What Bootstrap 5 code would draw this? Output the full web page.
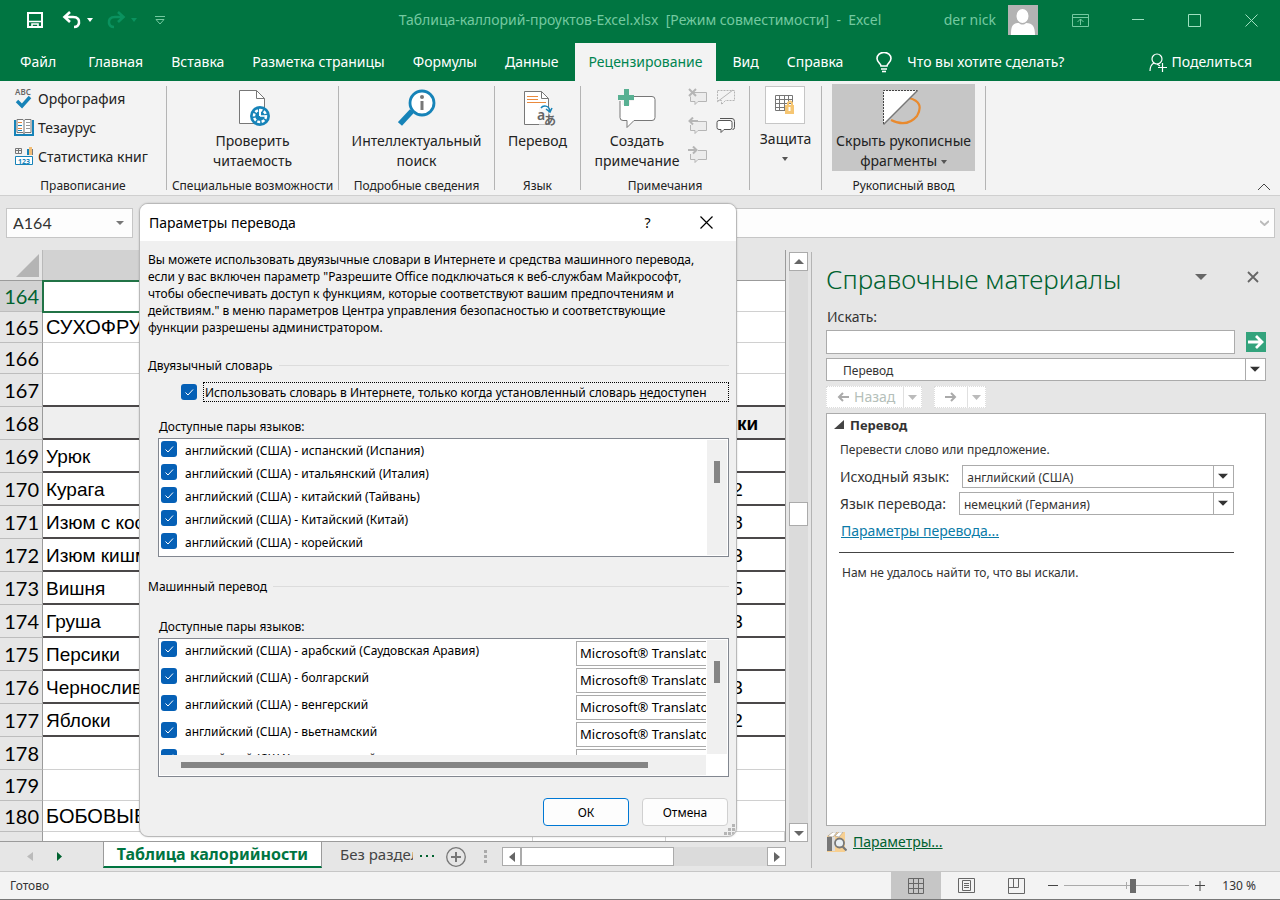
<!DOCTYPE html>
<html lang="ru">
<head>
<meta charset="utf-8">
<meta name="viewport" content="width=device-width, initial-scale=1">
<title>Таблица-каллорий-проуктов-Excel.xlsx - Excel</title>
<link href="https://cdn.jsdelivr.net/npm/bootstrap@5.3.0/dist/css/bootstrap.min.css" rel="stylesheet">
<style>
:root{--xl:#007541;--chrome:#e6e6e6;--ribbon:#f3f3f3;--edge:#ababab}
body{font:14px/20px "Noto Sans","Open Sans",sans-serif;color:#222;background:var(--chrome);overflow:hidden}
button{border:0;background:none;padding:0;color:inherit;font:inherit}
svg{display:block;flex:none}
.fs12{font-size:12px}
.shrinkable{min-height:0;min-width:0}
/* title bar and tabs */
.titlebar{background:var(--xl);color:#74c9a0;height:40px}
.titlebar .side{flex:1 1 0;min-width:0}
.winbtn{width:57px;height:40px;display:grid;place-items:center}
.tabs{background:var(--xl);height:41px}
.tabs .nav-link{color:#fff;padding:0 12px;line-height:38px;height:38px;border-radius:0}
.tabs .nav{gap:4px;padding-left:8px}
.tabs .nav-link.active{background:var(--ribbon);color:#008550;padding:0 14px}
/* ribbon */
.ribbon{background:var(--ribbon);border-bottom:1px solid #cfcfcf;height:115px}
.grp{display:flex;flex-direction:column;flex:none}
.grp-body{flex:1;padding-top:3px;display:flex;justify-content:center;align-items:flex-start}
.grp-name{font-size:12px;line-height:18px;text-align:center;white-space:nowrap}
.rule{width:1px;background:#b4b4b4;margin:5px 0}
.big{display:flex;flex-direction:column;align-items:center;white-space:nowrap;height:87px}
.big .ico{height:47px;display:grid;place-items:center}
.big.on{background:#c6c6c6;padding:0 4px}
.small-btn{display:flex;align-items:center;height:29px;gap:4px;white-space:nowrap}
.lockbox{width:40px;height:38px;border:1px solid #c6c6c6;background:#fff;display:grid;place-items:center}
.tri{display:inline-block;width:0;height:0;border:3px solid transparent;border-top:4px solid #555;border-bottom:0}
/* formula bar */
.fbar{height:54px;padding:12px 5px 12px 6px;gap:96px}
.fbox{height:30px;border:1px solid #c6c6c6;background:#fdfdfd;border-radius:0;display:flex;align-items:center}
.fbox input{border:0;background:none;width:100%;min-width:0;padding:0 6px;outline:0;color:#333}
.namebox{width:127px;flex:none}
.namebox input{font:16px/20px Lato,sans-serif}
/* sheet */
.sheet-wrap{overflow:hidden;border-right:1px solid #9b9b9b;border-bottom:1px solid #9b9b9b;background:#fff;flex:1 1 0;min-height:0;min-width:0;margin-right:3px}
.grid{width:100%;table-layout:fixed;border-collapse:separate;border-spacing:0}
.grid th,.grid td{padding:0;overflow:hidden;white-space:nowrap;height:33px;line-height:24px;vertical-align:middle;border-bottom:2px solid #4b4849}
.grid td{font:19px/24px "Liberation Sans",Arial,sans-serif;color:#000;padding:2px 4px 0 3px}
.grid td:last-child{text-align:center;padding-left:12px}
.grid tbody th{font:20px/24px Lato,sans-serif;color:#000;background:var(--chrome);border-right:1px solid #9b9b9b;border-bottom:1px solid #bdbdbd;text-align:right;padding-right:3px}
.grid thead th{height:31px;background:var(--chrome);border-bottom:1px solid #9b9b9b}
.grid thead .picked{background:#d2d2d2}
.grid tbody .picked{background:#d2d2d2;color:#00622f}
.grid .thin td{border-bottom:1px solid #d0d0d0}
.grid .low th,.grid .low td{height:31px}
.grid .head td{background:#efefef;font-weight:700}
.grid .split td{border-right:1px solid #d0d0d0}
.grid .cap td{font-size:20px;padding-top:0}
.grid td.cursor{outline:2px solid #217346;outline-offset:-1px}
.corner{border-right:1px solid #b9b9b9}
.corner svg{margin-left:16px}
.sbtn{width:19px;height:19px;border:1px solid var(--edge);background:#fff;display:grid;place-items:center;flex:none}
.vbar{width:19px;margin:2px 3px 0 0;background:#dbdbdb}
.thumb-v{height:24px;border:1px solid var(--edge);background:#fff}
.hbar{background:#dbdbdb;height:19px;width:284px}
.thumb-h{width:153px;border:1px solid var(--edge);background:#fff}
.sheetbar{height:29px;gap:0}
.sheettab{width:219px;height:26px;line-height:22px;background:#fff;border:1px solid #9b9b9b;border-width:0 1px;border-bottom:2px solid var(--xl);color:var(--xl);font-weight:700;font-size:16px;text-align:center}
/* task pane */
.pane{width:469px;margin-top:2px;border-left:1px solid #b4b4b4;padding:0 14px 0 14px;margin-bottom:3px;color:#333}
.pane h2{font:300 26px/36px "Noto Sans","Open Sans",sans-serif;color:#00622f;margin:9px 0 1px}
.field{height:24px;border:1px solid var(--edge);border-radius:0;background:#fff;padding:0 4px}
.pick{appearance:none;height:23px;border:1px solid var(--edge);border-radius:0;color:#333;font-size:12px;line-height:20px;padding:2px 24px 0 4px;background:#fff url("data:image/svg+xml,%3Csvg xmlns='http://www.w3.org/2000/svg' width='20' height='22'%3E%3Cpath d='M.5 0v22' stroke='%23ababab'/%3E%3Cpath d='M5 8h10l-5 5z' fill='%23333'/%3E%3C/svg%3E") no-repeat right center}
.navbtn{height:22px;background:#fff;border:1px dotted #dcdcdc;color:#b5bfba;display:flex;align-items:center}
.navbtn .drop{width:18px;height:22px;border-left:1px solid #e0e0e0;display:grid;place-items:center}
.results{border:1px solid var(--edge);background:#fff;min-height:0;flex:1;padding:0 31px 0 12px;margin-top:5px}
.line27{height:27px;display:flex;align-items:center}
.pane .rulebar{height:1px;background:#444;opacity:1;margin:8px 0 0;border:0}
/* status bar */
.statusbar{height:29px;background:var(--ribbon);border-top:1px solid #c6c6c6;border-bottom:1px solid #777;color:#333}
.view{width:50px;height:27px;display:grid;place-items:center}
.view.on{background:#c6c6c6}
.zoom{appearance:none;width:125px;height:14px;background:linear-gradient(#aaa,#aaa) center/100% 1px no-repeat,linear-gradient(#aaa,#aaa) center/1px 7px no-repeat}
.zoom::-webkit-slider-thumb{appearance:none;width:6px;height:14px;background:#6b6b6b}
/* dialog */
.dlg{position:absolute;left:139px;top:7px;width:598px;background:#f0f0f0;border:1px solid #b9b9b9;border-radius:9px;color:#000;font-size:12px;line-height:17px;overflow:hidden;box-shadow:0 0 2px #0003}
.dlg-head{height:37px;background:#fff;padding-left:9px;font-size:14px}
.dlg-body{padding:10px 7px 10px 8px}
.dlg p{margin:0;white-space:nowrap}
.legend-row{display:flex;align-items:center;gap:6px;height:18px}
.legend-row i{flex:1;height:1px;background:#dcdcdc}
.dlg input[type=checkbox]{appearance:none;width:16px;height:16px;flex:none;margin:0;border-radius:3px;background:#0560b6 url("data:image/svg+xml,%3Csvg xmlns='http://www.w3.org/2000/svg' width='16' height='16' fill='none' stroke='%23fff'%3E%3Cpath d='M4.500 8.500l2.500 2.500 5-5.500'/%3E%3C/svg%3E")}
.focusbox{border:1px dotted #000;flex:1;height:20px;line-height:20px;padding:0 1px;white-space:nowrap}
.lst{border:1px solid #828790;background:#fff;margin-left:10px;overflow:hidden}
.lst ul{list-style:none;margin:0;padding:0 0 0 2px;flex:1;min-width:0;overflow:hidden}
.lst li,.lst label{display:flex}
.lst label{gap:8px;line-height:22px;padding-top:2px;white-space:nowrap}
.lst label span{margin-top:-1px}
.lang5{height:119px}
.lang5 li{height:23px}
.mt{height:139px}
.mt li{height:27px;justify-content:space-between}
.mt ul{height:116px}
.mt .engine{width:130px;flex:none;height:25px;margin-top:2px;border:1px solid var(--edge);border-right:0;border-radius:0;padding:0 0 2px 3px;font-size:13px;color:#000;background:#fff}
.track{width:20px;background:#f0f0f0;margin:1px 1px 1px 1px;flex:none}
.track i{display:block;width:6px;height:22px;background:#858585;margin:21px 0 0 7px}
.track-h{height:20px;background:#f0f0f0;margin:0 22px 0 1px;padding:7px 0 0 21px}
.track-h i{display:block;height:6px;width:89%;background:#858585}
.dbtn{width:86px;height:28px;border:1px solid #d0d0d0;border-radius:4px;background:#fdfdfd}
.dbtn.main{border-color:#0078d4}
.grip{position:absolute;right:1px;bottom:1px}
</style>
</head>
<body class="d-flex flex-column vh-100">

<header class="titlebar d-flex align-items-center text-nowrap flex-shrink-0">
  <div class="side d-flex align-items-center">
    <button aria-label="Сохранить" style="margin-left:26px"><svg width="18" height="18" fill="none" stroke="#fff" stroke-width="2"><path d="M2 2h14v14H2z"/><path d="M2 10.500h14" stroke-width="1.500"/><path d="M6 16v-3h6v3" stroke-width="1.600"/></svg></button>
    <button aria-label="Отменить" style="margin-left:18px"><svg width="20" height="18" fill="none" stroke="#fff" stroke-width="2.600"><path d="M8 1L2.500 6 8 11M3 6h8c5 0 6.500 3 6 6s-2 4-5 4"/></svg></button>
    <svg style="margin-left:4px" width="8" height="5"><path d="M1 0h6L4 4z" fill="#fff"/></svg>
    <button aria-label="Вернуть" style="margin-left:12px" disabled><svg width="20" height="18" fill="none" stroke="#0a925f" stroke-width="2.600"><path d="M12 1l5.500 5L12 11M17 6H9C4 6 2.500 9 3 12s2 4 5 4"/></svg></button>
    <svg class="ms-1" width="8" height="5"><path d="M1 0h6L4 4z" fill="#0a925f"/></svg>
    <button aria-label="Настройка панели" style="margin-left:17px"><svg width="10" height="9" fill="none" stroke="#74c9a0"><path d="M0 .5h10M1 3.500h8L5 8z"/></svg></button>
  </div>
  <div>Таблица-каллорий-проуктов-Excel.xlsx&nbsp; [Режим совместимости]&nbsp; -&nbsp; Excel</div>
  <div class="side d-flex align-items-center justify-content-end">
    <span class="me-2">der nick</span>
    <svg width="30" height="30" style="margin:0 14px 0 4px"><path fill="#b3b3b3" d="M0 0h30v30H0z"/><path fill="#fff" d="M14.500 4a6 7 0 0 1 0 14 6 7 0 0 1 0-14M3 30c0-8 1-12 8-12 2 2 5 2 7 0 7 0 9 4 9 12z"/></svg>
    <button class="winbtn" aria-label="Параметры ленты"><svg width="17" height="13" fill="none" stroke="#74c9a0"><path d="M.5.500h16v12H.500zM.500 3.500h16M8.500 11V5M5.500 8l3-3 3 3"/></svg></button>
    <button class="winbtn" aria-label="Свернуть"><svg width="12" height="2"><path d="M0 0h12v1H0z" fill="#9fe0c0"/></svg></button>
    <button class="winbtn" aria-label="Развернуть"><svg width="13" height="13" fill="none" stroke="#9fe0c0"><path d="M.5.500h12v12H.500z"/></svg></button>
    <button class="winbtn" aria-label="Закрыть"><svg width="13" height="13" stroke="#9fe0c0"><path d="M.5.500l12 12M12.500.500l-12 12"/></svg></button>
  </div>
</header>

<div class="tabs d-flex align-items-end text-nowrap flex-shrink-0">
  <nav class="nav flex-nowrap">
    <a class="nav-link me-1" href="#">Файл</a>
    <a class="nav-link" href="#">Главная</a>
    <a class="nav-link" href="#">Вставка</a>
    <a class="nav-link" href="#">Разметка страницы</a>
    <a class="nav-link" href="#">Формулы</a>
    <a class="nav-link" href="#">Данные</a>
    <a class="nav-link active" href="#">Рецензирование</a>
    <a class="nav-link" href="#">Вид</a>
    <a class="nav-link" href="#">Справка</a>
  </nav>
  <a class="nav-link d-flex align-items-center" style="gap:15px;margin-left:9px" href="#"><svg width="16" height="21" fill="none" stroke="#fff" stroke-width="1.600"><path d="M5 14c0-2-4-4-4-7.500a6.500 5.700 0 0 1 14 0c0 3.500-4 5.500-4 7.500zM5 17h6"/><path d="M6 19.500h4"/></svg>Что вы хотите сделать?</a>
  <a class="nav-link d-flex align-items-center ms-auto me-3" href="#"><svg class="me-1" width="18" height="19" fill="none" stroke="#fff" stroke-width="1.200"><circle cx="8" cy="6" r="5"/><path d="M1 18c0-5 2-7 4-8M8 11l3 2M13.500 10v9M9 14.500h9"/></svg>Поделиться</a>
</div>

<section class="ribbon d-flex flex-shrink-0">
  <div class="grp" style="width:166px">
    <div class="grp-body flex-column justify-content-start" style="padding-left:14px">
      <button class="small-btn"><svg width="20" height="24"><text x="1" y="8" font-size="8" font-weight="600" fill="#666">ABC</text><path d="M3 14l5 5 8-9" fill="none" stroke="#1683b8" stroke-width="3.400"/></svg>Орфография</button>
      <button class="small-btn"><svg width="20" height="20" fill="none"><path d="M1 2v15h18V2" stroke="#1683b8" stroke-width="2"/><path d="M3 1.500h6l1 1 1-1h6v13h-6l-1 1-1-1H3z" fill="#fff" stroke="#777"/><path d="M10 2v14" stroke="#777"/><path d="M4 4.500h4M4 10.500h4" stroke="#e8833a"/><path d="M4 7.500h4M4 12.500h4" stroke="#1683b8"/><path d="M12 4.500h4M12 7.500h4M12 10.500h4" stroke="#999"/></svg>Тезаурус</button>
      <button class="small-btn"><svg width="20" height="20" fill="none"><path d="M1.500 1.500h6v5h-6zM1.500 3.500h6M4.500 1.500v5" stroke="#777"/><path d="M13 2h2v6h-2z" fill="#1683b8"/><path d="M15 0h3v8h-3z" fill="#f3bd75"/><path d="M18 2h1v6h-1z" fill="#777"/><path d="M1.500 9.500h17v8h-17z" fill="#fff" stroke="#1683b8"/><text x="4" y="16.500" font-size="7" font-weight="700" fill="#1683b8">123</text></svg>Статистика книг</button>
    </div>
    <div class="grp-name">Правописание</div>
  </div>
  <div class="rule"></div>
  <div class="grp" style="width:171px">
    <div class="grp-body"><button class="big"><span class="ico"><svg width="34" height="38" fill="none"><path d="M3.500 1.500h17l8 8v25h-25z" fill="#fff" stroke="#777"/><path d="M20.500 1.500v8h8" stroke="#777"/><circle cx="24" cy="27" r="10" fill="#1683b8"/><circle cx="24" cy="27" r="6" stroke="#fff" stroke-width="2.500" stroke-dasharray="3 1.500"/><path d="M24 20v7" stroke="#fff" stroke-width="2"/><path d="M24 27h7" stroke="#fff" stroke-width="1.500"/></svg></span>Проверить<br>читаемость</button></div>
    <div class="grp-name">Специальные возможности</div>
  </div>
  <div class="rule"></div>
  <div class="grp" style="width:155px">
    <div class="grp-body"><button class="big"><span class="ico"><svg width="38" height="38" fill="none"><path d="M2 35l12-13" stroke="#1683b8" stroke-width="5.500"/><circle cx="24" cy="14" r="12" fill="#fff" stroke="#1683b8" stroke-width="2.800"/><path d="M24 12v9" stroke="#777" stroke-width="3"/><circle cx="24" cy="8" r="2" fill="#777"/></svg></span>Интеллектуальный<br>поиск</button></div>
    <div class="grp-name">Подробные сведения</div>
  </div>
  <div class="rule"></div>
  <div class="grp" style="width:85px">
    <div class="grp-body"><button class="big"><span class="ico"><svg width="38" height="40" fill="none"><path d="M5.500 3.500h17l7 7v26h-24z" fill="#fff" stroke="#777"/><path d="M22.500 3.500v7h7" stroke="#777"/><path d="M8 8.500h11M8 11.500h11M8 14.500h19" stroke="#ea8a3d"/><path d="M20 20h14v18H20z" fill="#f3f3f3" opacity=".6"/><path d="M22 20c2-3 8-3 9 3m-4-2l4 3 2-4" stroke="#1683b8" stroke-width="1.500"/><text x="18" y="32" font-size="14" font-weight="600" fill="#666">a</text><text x="25" y="37" font-size="12" font-weight="700" fill="#666" font-family="Noto Sans CJK JP,sans-serif">あ</text></svg></span>Перевод</button></div>
    <div class="grp-name">Язык</div>
  </div>
  <div class="rule"></div>
  <div class="grp" style="width:168px">
    <div class="grp-body gap-2">
      <button class="big"><span class="ico"><svg width="40" height="40" fill="none"><path d="M6 8.500h29q3 0 3 3v18q0 3-3 3H17l-7 7v-7H6q-3 0-3-3v-18q0-3 3-3z" fill="#fff" stroke="#777"/><path d="M1 9h16M9 1v16" stroke="#f3f3f3" stroke-width="8"/><path d="M1 9.500h16M9.500 1v17" stroke="#58b092" stroke-width="5"/></svg></span>Создать<br>примечание</button>
      <div class="d-grid" style="grid-template-columns:20px 20px;grid-auto-rows:29px;column-gap:8px;padding-top:4px;align-items:start">
        <button aria-label="Удалить" disabled><svg width="20" height="18" fill="none" stroke="#b5b5b5"><path d="M5 4.500h13.500v9H10l-3 3v-3H2.500v-5" fill="#ececec"/><path d="M1 1l7 7M8 1L1 8" stroke-width="2"/></svg></button>
        <button aria-label="Показать" disabled><svg width="20" height="18" fill="none" stroke="#b5b5b5"><path d="M1.500 2.500h17v10h-9l-4 4v-4h-4z" stroke-dasharray="2 1"/><path d="M1 14L17 2"/></svg></button>
        <button aria-label="Предыдущее" disabled><svg width="20" height="18" fill="none" stroke="#b5b5b5"><path d="M9 4.500h9.500v9H10l-3 3v-3H2.500V8" fill="#ececec"/><path d="M10 4H2M5 .500L1.500 4 5 7.500" stroke-width="2"/></svg></button>
        <button aria-label="Показать все"><svg width="20" height="18" fill="none" stroke="#555"><path d="M4 1.500h12q2.500 0 2.500 3v6q0 2-2 2"/><path d="M3 3.500h11q2 0 2 2v5q0 2-2 2H8l-3 3v-3H3q-2 0-2-2v-5q0-2 2-2z" fill="#fff"/></svg></button>
        <button aria-label="Следующее" disabled><svg width="20" height="18" fill="none" stroke="#b5b5b5"><path d="M10 4.500h8.500v9H10l-3 3v-3H2.500V8" fill="#ececec"/><path d="M0 4h8M5 .500L8.500 4 5 7.500" stroke-width="2"/></svg></button>
      </div>
    </div>
    <div class="grp-name">Примечания</div>
  </div>
  <div class="rule"></div>
  <div class="grp" style="width:71px">
    <div class="grp-body"><button class="big" style="padding-top:2px"><span class="lockbox"><svg width="20" height="20" fill="none" stroke="#777"><path d="M.5.500h17v15H.500zM.500 4.500h17M.500 8.500h17M.500 12.500h17M4.500.500v15M9.500.500v15M13.500.500v15"/><path d="M13 10V8q2.500-3 4 0v3" stroke="#f6c673" stroke-width="2"/><path d="M10 10h9v9h-9z" fill="#f6c673" stroke="none"/><path d="M14.500 12v4" stroke="#fff" stroke-width="2"/></svg></span><span style="margin-top:5px">Защита</span><i class="tri" style="margin-top:8px"></i></button></div>
  </div>
  <div class="rule"></div>
  <div class="grp" style="width:163px">
    <div class="grp-body"><button class="big on"><span class="ico"><svg width="42" height="38" fill="none"><path d="M9 31q16 8 26-4 8-14-8-18" stroke="#e98a2e" stroke-width="2.200"/><path d="M1.500 1.500h34l-34 34z" fill="#fff"/><path d="M1.500 35V1.500h34" stroke="#444" stroke-dasharray="2 1"/><path d="M1.500 35.500l34-34" stroke="#777" stroke-width="1.400"/></svg></span>Скрыть рукописные<br><span>фрагменты <i class="tri align-middle"></i></span></button></div>
    <div class="grp-name">Рукописный ввод</div>
  </div>
  <div class="rule"></div>
  <button class="ms-auto align-self-end" style="margin:0 9px 4px 0" aria-label="Свернуть ленту"><svg width="14" height="8" fill="none" stroke="#444"><path d="M1 7l6-6 6 6"/></svg></button>
</section>

<main class="flex-fill d-flex flex-column position-relative shrinkable">
  <div class="fbar d-flex flex-shrink-0">
    <div class="fbox namebox"><input aria-label="Имя ячейки" value="A164"><svg width="8" height="5" style="margin-right:8px"><path d="M0 0h8L4 4z" fill="#777"/></svg></div>
    <div class="fbox flex-fill"><input aria-label="Строка формул"><svg width="9" height="6" fill="none" style="margin-right:5px"><path d="M0 1l4.500 4L9 1" stroke="#bbb" stroke-width="2"/></svg></div>
  </div>
  <div class="d-flex flex-fill shrinkable">
    <div class="d-flex flex-column flex-fill shrinkable">
      <div class="d-flex flex-fill shrinkable">
        <div class="sheet-wrap">
            <table class="grid">
              <colgroup><col style="width:43px"><col><col style="width:133px"><col style="width:119px"></colgroup>
              <thead><tr><th class="corner"><svg width="23" height="23"><path d="M23 0v23H0z" fill="#b4b4b4"/></svg></th><th class="picked"></th><th></th><th></th></tr></thead>
              <tbody>
                <tr class="thin low"><th class="picked">164</th><td class="cursor"></td><td></td><td></td></tr>
                <tr class="thin low cap"><th>165</th><td>СУХОФРУКТЫ</td><td></td><td></td></tr>
                <tr class="thin low"><th>166</th><td></td><td></td><td></td></tr>
                <tr><th>167</th><td></td><td></td><td></td></tr>
                <tr class="head"><th>168</th><td></td><td></td><td>Белки</td></tr>
                <tr><th>169</th><td>Урюк</td><td></td><td></td></tr>
                <tr><th>170</th><td>Курага</td><td></td><td>5,2</td></tr>
                <tr><th>171</th><td>Изюм с косточкой</td><td></td><td>1,8</td></tr>
                <tr><th>172</th><td>Изюм кишмиш</td><td></td><td>2,3</td></tr>
                <tr><th>173</th><td>Вишня</td><td></td><td>1,5</td></tr>
                <tr><th>174</th><td>Груша</td><td></td><td>2,3</td></tr>
                <tr><th>175</th><td>Персики</td><td></td><td></td></tr>
                <tr><th>176</th><td>Чернослив</td><td></td><td>2,3</td></tr>
                <tr><th>177</th><td>Яблоки</td><td></td><td>3,2</td></tr>
                <tr class="thin"><th>178</th><td></td><td></td><td></td></tr>
                <tr class="thin low"><th>179</th><td></td><td></td><td></td></tr>
                <tr class="thin low cap"><th>180</th><td>БОБОВЫЕ</td><td></td><td></td></tr>
                <tr class="thin low split"><th>181</th><td></td><td></td><td></td></tr>
              </tbody>
            </table>
        </div>
        <div class="vbar d-flex flex-column">
          <button class="sbtn" aria-label="Вверх"><svg width="10" height="6"><path d="M5 0l5 5H0z" fill="#666"/></svg></button>
          <div style="flex:232"></div><div class="thumb-v"></div><div style="flex:298"></div>
          <button class="sbtn" aria-label="Вниз"><svg width="10" height="6"><path d="M5 6l5-5H0z" fill="#666"/></svg></button>
        </div>
      </div>
      <div class="sheetbar d-flex align-items-center flex-shrink-0">
        <button aria-label="Предыдущий лист" style="margin-left:27px"><svg width="7" height="10"><path d="M6 0v9L0 4.500z" fill="#bbb"/></svg></button>
        <button aria-label="Следующий лист" style="margin-left:22px"><svg width="7" height="10"><path d="M1 0v9l5-4.500z" fill="#00622f"/></svg></button>
        <button class="sheettab align-self-start" style="margin-left:40px">Таблица калорийности</button>
        <button class="text-nowrap overflow-hidden text-start" style="margin:-6px 7px 0 18px;width:73px;font-size:15px;color:#444">Без раздела</button>
        <svg width="14" height="3" fill="#00622f"><path d="M0 0h2v2H0zM6 0h2v2H6zM12 0h2v2h-2z"/></svg>
        <button aria-label="Новый лист" style="margin-left:12px"><svg width="20" height="20" fill="none" stroke="#777"><circle cx="10" cy="10" r="9.300" stroke-width="1.300"/><path d="M10 5v10M5 10h10" stroke-width="2"/></svg></button>
        <svg width="3" height="13" fill="#aaa" style="margin-left:18px"><path d="M0 0h3v3H0zM0 5h3v3H0zM0 10h3v3H0z"/></svg>
        <div class="hbar d-flex ms-auto" style="margin-right:25px">
          <button class="sbtn" aria-label="Влево"><svg width="6" height="10"><path d="M6 0v10L0 5z" fill="#666"/></svg></button>
          <div class="thumb-h"></div>
          <button class="sbtn ms-auto" aria-label="Вправо"><svg width="6" height="10"><path d="M0 0v10l6-5z" fill="#666"/></svg></button>
        </div>
      </div>
    </div>

    <aside class="pane d-flex flex-column flex-shrink-0">
      <div class="d-flex align-items-start justify-content-between">
        <h2>Справочные материалы</h2>
        <div class="d-flex align-items-center" style="gap:40px;margin:19px 7px 0 0"><svg width="12" height="6"><path d="M0 0h12L6 6z" fill="#666"/></svg><button aria-label="Закрыть область"><svg width="12" height="12" stroke="#666" stroke-width="1.800"><path d="M1 1l10 10M11 1L1 11"/></svg></button></div>
      </div>
      <label for="q" style="margin:9px 0 3px 1px">Искать:</label>
      <div class="d-flex align-items-center" style="gap:11px"><input id="q" class="field flex-fill"><button aria-label="Начать поиск"><svg width="20" height="20" fill="none"><path d="M0 0h20v20H0z" fill="#33a37c"/><path d="M2 10h14M10 4l6 6-6 6" stroke="#fff" stroke-width="2.800"/></svg></button></div>
      <select class="pick mt-1" style="padding-left:16px" aria-label="Служба"><option>Перевод</option></select>
      <div class="d-flex" style="gap:12px;margin-top:5px">
        <div class="navbtn"><button class="d-flex align-items-center" style="width:76px;gap:5px;padding-left:10px" disabled><svg width="12" height="10" fill="none" stroke="#aaa" stroke-width="2"><path d="M12 5H2M6 1L2 5l4 4"/></svg>Назад</button><button class="drop" aria-label="Журнал назад" disabled><svg width="9" height="5"><path d="M0 0h9L4.500 5z" fill="#bbb"/></svg></button></div>
        <div class="navbtn"><button class="d-grid" style="width:32px;place-items:center" aria-label="Вперёд" disabled><svg width="12" height="10" fill="none" stroke="#aaa" stroke-width="2"><path d="M0 5h10M6 1l4 4-4 4"/></svg></button><button class="drop" aria-label="Журнал вперёд" disabled><svg width="9" height="5"><path d="M0 0h9L4.500 5z" fill="#bbb"/></svg></button></div>
      </div>
      <div class="results">
        <div class="fw-bold d-flex align-items-center" style="height:22px;font-size:13px;gap:6px;margin-left:-5px"><svg width="10" height="10"><path d="M10 0v9H0z" fill="#444"/></svg>Перевод</div>
        <div class="fs12" style="padding:4px 0 3px 1px">Перевести слово или предложение.</div>
        <div class="line27"><label for="src" style="margin-left:1px">Исходный язык:</label><select id="src" class="pick flex-fill" style="margin-left:13px"><option>английский (США)</option></select></div>
        <div class="line27"><label for="dst" style="margin-left:1px">Язык перевода:</label><select id="dst" class="pick flex-fill" style="margin-left:13px"><option>немецкий (Германия)</option></select></div>
        <div class="line27" style="padding-left:2px"><a href="#" style="color:#0b7ba8">Параметры перевода...</a></div>
        <hr class="rulebar">
        <div class="fs12" style="margin:10px 0 0 3px">Нам не удалось найти то, что вы искали.</div>
      </div>
      <div class="d-flex align-items-center" style="height:42px;gap:6px;padding:0 0 10px 1px"><svg width="20" height="20" fill="none"><path d="M0 4l6-4h12v20H0z" fill="#f7cf91"/><path d="M0 5h5v14H0z" fill="#777"/><path d="M1 4l5-4h4L6 5zM8 4l4-4h4l-4 5z" fill="#fff" stroke="#999" stroke-width=".6"/><path d="M5 5h3v14H5z" fill="#ddd"/><circle cx="12.500" cy="11" r="4.500" fill="#e8eef2" stroke="#777" stroke-width="1.800"/><path d="M15.500 14.500l4 4" stroke="#777" stroke-width="2.200"/></svg><a href="#" style="color:#00622f">Параметры...</a></div>
    </aside>
  </div>

  <section class="dlg" role="dialog" aria-labelledby="dlgt">
    <div class="dlg-head d-flex align-items-center">
      <span id="dlgt" class="me-auto">Параметры перевода</span>
      <button aria-label="Справка" style="width:57px">?</button>
      <button aria-label="Закрыть" style="width:60px" class="d-grid"><svg class="m-auto" width="13" height="13" stroke="#000" stroke-width="1.200"><path d="M.5.500l12 12M12.500.500l-12 12"/></svg></button>
    </div>
    <div class="dlg-body">
      <p>Вы можете использовать двуязычные словари в Интернете и средства машинного перевода,<br>если у вас включен параметр "Разрешите Office подключаться к веб-службам Майкрософт,<br>чтобы обеспечивать доступ к функциям, которые соответствуют вашим предпочтениям и<br>действиям." в меню параметров Центра управления безопасностью и соответствующие<br>функции разрешены администратором.</p>
      <div class="legend-row" style="margin-top:20px">Двуязычный словарь<i></i></div>
      <div class="d-flex align-items-center" style="margin:8px 0 0 33px;gap:6px"><input type="checkbox" id="web" checked><label for="web" class="focusbox">Использовать словарь в Интернете, только когда установленный словарь <u>н</u>едоступен</label></div>
      <div style="margin:16px 0 3px 11px">Доступные пары языков:</div>
      <div class="lst lang5 d-flex">
        <ul>
          <li><label><input type="checkbox" checked><span>английский (США) - испанский (Испания)</span></label></li>
          <li><label><input type="checkbox" checked><span>английский (США) - итальянский (Италия)</span></label></li>
          <li><label><input type="checkbox" checked><span>английский (США) - китайский (Тайвань)</span></label></li>
          <li><label><input type="checkbox" checked><span>английский (США) - Китайский (Китай)</span></label></li>
          <li><label><input type="checkbox" checked><span>английский (США) - корейский</span></label></li>
        </ul>
        <div class="track"><i></i></div>
      </div>
      <div class="legend-row" style="margin-top:20px">Машинный перевод<i></i></div>
      <div style="margin:23px 0 3px 11px">Доступные пары языков:</div>
      <div class="lst mt">
        <div class="d-flex">
          <ul>
            <li><label><input type="checkbox" checked><span>английский (США) - арабский (Саудовская Аравия)</span></label><input class="engine" aria-label="Служба: арабский" value="Microsoft® Translator"></li>
            <li><label><input type="checkbox" checked><span>английский (США) - болгарский</span></label><input class="engine" aria-label="Служба: болгарский" value="Microsoft® Translator"></li>
            <li><label><input type="checkbox" checked><span>английский (США) - венгерский</span></label><input class="engine" aria-label="Служба: венгерский" value="Microsoft® Translator"></li>
            <li><label><input type="checkbox" checked><span>английский (США) - вьетнамский</span></label><input class="engine" aria-label="Служба: вьетнамский" value="Microsoft® Translator"></li>
            <li><label><input type="checkbox" checked><span>английский (США) - голландский</span></label><input class="engine" aria-label="Служба: голландский" value="Microsoft® Translator"></li>
          </ul>
          <div class="track"><i></i></div>
        </div>
        <div class="track-h"><i></i></div>
      </div>
      <div class="d-flex justify-content-end" style="gap:13px;margin-top:21px;padding-right:1px"><button class="dbtn main">ОК</button><button class="dbtn">Отмена</button></div>
    </div>
    <svg class="grip" width="11" height="11" fill="#b5b5b5"><path d="M8 0h3v3H8zM4 4h3v3H4zM8 4h3v3H8zM0 8h3v3H0zM4 8h3v3H4zM8 8h3v3H8z"/></svg>
  </section>
</main>

<footer class="statusbar d-flex align-items-center fs12 flex-shrink-0">
  <span class="me-auto" style="margin-left:10px">Готово</span>
  <button class="view on" aria-label="Обычный"><svg width="16" height="16" fill="none" stroke="#666"><path d="M.5.500h15v15H.500zM.500 5.500h15M.500 10.500h15M5.500.500v15M10.500.500v15"/></svg></button>
  <button class="view" aria-label="Разметка страницы"><svg width="17" height="15" fill="none" stroke="#666"><path d="M.5.500h16v14H.500z"/><path d="M4.500 2.500h8v10h-8zM6 5.500h5M6 7.500h5M6 9.500h5"/></svg></button>
  <button class="view" aria-label="Страничный"><svg width="17" height="16" fill="none" stroke="#666"><path d="M.5.500h16v15H.500zM.500 9.500h10V.500M5.500.500v9"/></svg></button>
  <button aria-label="Уменьшить" style="margin:0 6px 0 7px"><svg width="10" height="10"><path d="M0 4h10v1H0z" fill="#444"/></svg></button>
  <input type="range" class="zoom" min="0" max="100" value="55" aria-label="Масштаб">
  <button aria-label="Увеличить" style="margin-left:6px"><svg width="10" height="10"><path d="M0 4h10v1H0zM4.500 0h1v10h-1z" fill="#444"/></svg></button>
  <span style="margin:0 24px 0 17px">130 %</span>
</footer>

<script src="https://cdn.jsdelivr.net/npm/bootstrap@5.3.0/dist/js/bootstrap.bundle.min.js"></script>
</body>
</html>
